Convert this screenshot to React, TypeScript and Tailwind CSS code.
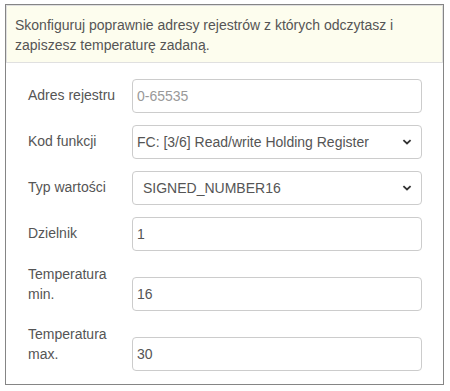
import React from "react";

const font = { fontFamily: '"Liberation Sans", Arial, sans-serif' };

function Chevron() {
  return (
    <svg width="10" height="7" viewBox="0 0 10 7" className="absolute right-[9px] top-1/2 -translate-y-1/2">
      <path d="M1.4 1.6 L5 5 L8.6 1.6" fill="none" stroke="#333" strokeWidth="1.8" />
    </svg>
  );
}

function Row({
  label,
  double,
  mt,
  children,
}: {
  label: React.ReactNode;
  double?: boolean;
  mt: string;
  children: React.ReactNode;
}) {
  return (
    <div className={`flex items-start ${mt}`}>
      <div
        className={`w-[104px] shrink-0 text-[14px] leading-[20px] text-[#555] ${double ? "-mt-[13px]" : "mt-[6px]"}`}
      >
        {label}
      </div>
      {children}
    </div>
  );
}

function Input({ value, placeholder }: { value?: string; placeholder?: string }) {
  return (
    <div className="w-[290px] h-[34px] border border-[#ccc] rounded-[4px] flex items-center pl-[4px] text-[14px]">
      {value ? (
        <span className="text-[#555]">{value}</span>
      ) : (
        <span className="text-[#999]">{placeholder}</span>
      )}
    </div>
  );
}

function Select({ value, pl }: { value: string; pl: string }) {
  return (
    <div className={`relative w-[290px] h-[34px] border border-[#ccc] rounded-[4px] flex items-center ${pl} text-[14px] text-[#555]`}>
      <span>{value}</span>
      <Chevron />
    </div>
  );
}

export default function App() {
  return (
    <div className="pl-[5px] pt-[4px] bg-white w-[450px] h-[391px]" style={font}>
      <div className="w-[439px] h-[381px] border border-[#858585] bg-white">
        <div className="border border-[#e0e0e0] bg-[#fdfdee] pt-[9px] pb-[7px] pl-[8px] pr-[8px] text-[14px] leading-[20px] text-[#555]">
          Skonfiguruj poprawnie adresy rejestrów z których odczytasz i zapiszesz temperaturę zadaną.
        </div>
        <div className="pl-[22px] pt-[16px]">
          <Row label="Adres rejestru" mt="mt-0">
            <Input placeholder="0-65535" />
          </Row>
          <Row label="Kod funkcji" mt="mt-[12px]">
            <Select value="FC: [3/6] Read/write Holding Register" pl="pl-[4px]" />
          </Row>
          <Row label="Typ wartości" mt="mt-[12px]">
            <Select value="SIGNED_NUMBER16" pl="pl-[10px]" />
          </Row>
          <Row label="Dzielnik" mt="mt-[12px]">
            <Input value="1" />
          </Row>
          <Row label="Temperatura min." double mt="mt-[26px]">
            <Input value="16" />
          </Row>
          <Row label="Temperatura max." double mt="mt-[26px]">
            <Input value="30" />
          </Row>
        </div>
      </div>
    </div>
  );
}
